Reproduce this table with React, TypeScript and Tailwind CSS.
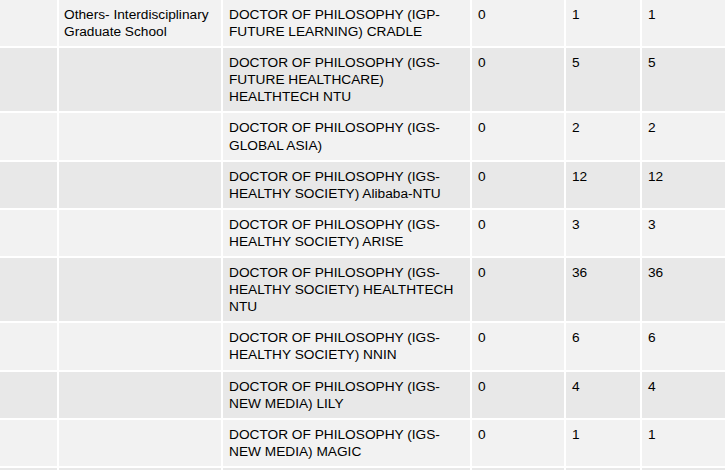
import { Fragment } from 'react'

// ── Data ──────────────────────────────────────────────────────────────────────

interface ProgrammeRow {
  school: string
  programme: string
  a: string
  b: string
  total: string
}

const ROWS: ProgrammeRow[] = [
  { school: 'Others- Interdisciplinary Graduate School', programme: 'DOCTOR OF PHILOSOPHY (IGP-FUTURE LEARNING) CRADLE', a: '0', b: '1', total: '1' },
  { school: '', programme: 'DOCTOR OF PHILOSOPHY (IGS-FUTURE HEALTHCARE) HEALTHTECH NTU', a: '0', b: '5', total: '5' },
  { school: '', programme: 'DOCTOR OF PHILOSOPHY (IGS-GLOBAL ASIA)', a: '0', b: '2', total: '2' },
  { school: '', programme: 'DOCTOR OF PHILOSOPHY (IGS-HEALTHY SOCIETY) Alibaba-NTU', a: '0', b: '12', total: '12' },
  { school: '', programme: 'DOCTOR OF PHILOSOPHY (IGS-HEALTHY SOCIETY) ARISE', a: '0', b: '3', total: '3' },
  { school: '', programme: 'DOCTOR OF PHILOSOPHY (IGS-HEALTHY SOCIETY) HEALTHTECH NTU', a: '0', b: '36', total: '36' },
  { school: '', programme: 'DOCTOR OF PHILOSOPHY (IGS-HEALTHY SOCIETY) NNIN', a: '0', b: '6', total: '6' },
  { school: '', programme: 'DOCTOR OF PHILOSOPHY (IGS-NEW MEDIA) LILY', a: '0', b: '4', total: '4' },
  { school: '', programme: 'DOCTOR OF PHILOSOPHY (IGS-NEW MEDIA) MAGIC', a: '0', b: '1', total: '1' },
  // next row only peeks in at the bottom edge
  { school: '', programme: '', a: '', b: '', total: '' },
]

// ── Row ───────────────────────────────────────────────────────────────────────

function Row({ row, index }: { row: ProgrammeRow; index: number }) {
  const bg = index % 2 === 0 ? 'bg-[#f2f2f2]' : 'bg-[#e8e8e8]'
  const cell = `${bg} pt-[6px] pb-[6px] px-[6px]`

  return (
    <Fragment>
      <div className={`${cell} min-h-[46px]`} />
      <div className={`${bg} pt-[6px] pb-[6px] pl-[5px] pr-[6px]`}>{row.school}</div>
      <div className={cell}>{row.programme}</div>
      <div className={cell}>{row.a}</div>
      <div className={cell}>{row.b}</div>
      <div className={cell}>{row.total}</div>
    </Fragment>
  )
}

// ── Page ──────────────────────────────────────────────────────────────────────

export default function App() {
  return (
    <div className="w-[728px] h-[470px] overflow-hidden bg-white">
      <div
        className="
          grid grid-cols-[57px_162px_247px_92px_74px_83px] gap-[2px]
          text-[13.7px] leading-[17.1px] text-black
          font-['Liberation_Sans',Arial,sans-serif]
        "
      >
        {ROWS.map((row, i) => (
          <Row key={i} row={row} index={i} />
        ))}
      </div>
    </div>
  )
}
